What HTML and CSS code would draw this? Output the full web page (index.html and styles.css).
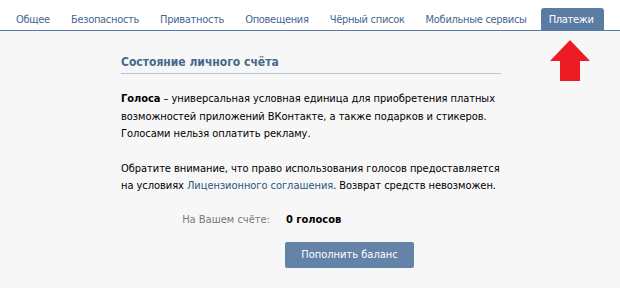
FILE: index.html
```html
<!DOCTYPE html>
<html lang="ru">
<head>
<meta charset="utf-8">
<link rel="stylesheet" href="styles.css">
</head>
<body>
<div class="tabs">
  <a class="tab">Общее</a>
  <a class="tab">Безопасность</a>
  <a class="tab">Приватность</a>
  <a class="tab">Оповещения</a>
  <a class="tab">Чёрный список</a>
  <a class="tab">Мобильные сервисы</a>
  <a class="tab active">Платежи</a>
</div>
<div class="page">
  <div class="arrow">
    <svg width="40" height="41" viewBox="0 0 40 41"><polygon points="20,0 40,21 30,21 30,41 10,41 10,21 0,21" fill="#ed1c24"/></svg>
  </div>
  <div class="content">
    <h2 class="header">Состояние личного счёта</h2>
    <p class="text"><b>Голоса</b> – универсальная условная единица для приобретения платных возможностей приложений ВКонтакте, а также подарков и стикеров. Голосами нельзя оплатить рекламу.</p>
    <p class="text">Обратите внимание, что право использования голосов предоставляется на условиях <a class="link">Лицензионного соглашения</a>. Возврат средств невозможен.</p>
    <div class="balance">
      <span class="label">На Вашем счёте:</span>
      <span class="value">0 голосов</span>
    </div>
    <div class="actions">
      <button class="button">Пополнить баланс</button>
    </div>
  </div>
</div>
</body>
</html>
```
FILE: styles.css
```css
html, body {
  margin: 0;
  padding: 0;
}
body {
  font-family: "DejaVu Sans Condensed", "DejaVu Sans", sans-serif;
  font-stretch: condensed;
  font-size: 11px;
  color: #000;
  background: #f7f7f7;
  width: 620px;
  height: 288px;
  overflow: hidden;
}
.tabs {
  display: flex;
  align-items: flex-end;
  height: 30px;
  padding-left: 9px;
  gap: 7px;
  background: #fff;
  border-bottom: 1px solid #5b7ca2;
}
.tab {
  display: block;
  height: 22px;
  line-height: 23px;
  padding: 0 7px;
  color: #45688e;
  border-radius: 3px 3px 0 0;
  white-space: nowrap;
  letter-spacing: -0.3px;
}
.tab.active {
  background: #5b7ca2;
  color: #fff;
  padding: 0 10px 0 8px;
}
.page {
  position: relative;
}
.arrow {
  position: absolute;
  left: 550px;
  top: 9px;
  width: 40px;
  height: 41px;
}
.arrow svg {
  display: block;
}
.content {
  width: 380px;
  margin: 0 auto;
  padding-top: 20px;
  padding-left: 2px;
}
.header {
  margin: 0;
  font-size: 12px;
  font-weight: bold;
  color: #45688e;
  line-height: 22px;
  border-bottom: 1px solid #b9c4da;
}
.text {
  margin: 16px -10px 17px 0;
  line-height: 17.6px;
  letter-spacing: -0.05px;
}
.text + .text {
  margin-top: 16px;
}
.link {
  color: #2b587a;
}
.balance {
  display: flex;
  margin-top: 16px;
  line-height: 16px;
}
.label {
  width: 149px;
  text-align: right;
  color: #777;
}
.value {
  margin-left: 16px;
  font-weight: bold;
}
.actions {
  padding-left: 164px;
  margin-top: 14px;
}
.button {
  display: block;
  width: 129px;
  height: 26px;
  border: 0;
  border-radius: 2px;
  background: #6383a8;
  color: #fff;
  font-family: inherit;
  font-stretch: condensed;
  font-size: 11px;
  padding: 0;
}
```
